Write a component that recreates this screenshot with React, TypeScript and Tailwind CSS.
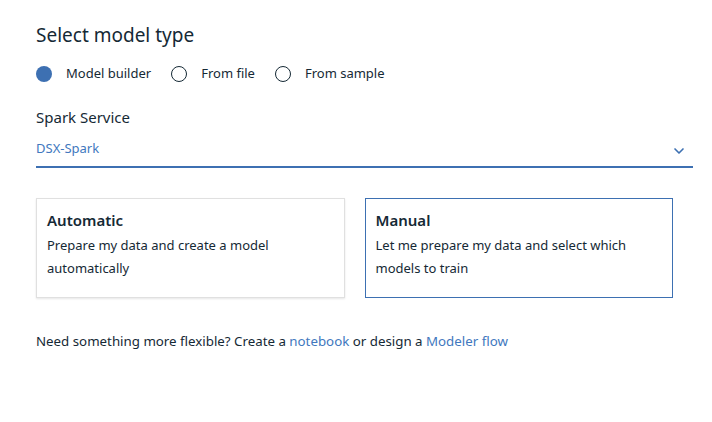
import { ChevronDown } from 'lucide-react';

function Radio({ label, checked }: { label: string; checked?: boolean }) {
  return (
    <label className="flex items-center gap-[14px]">
      {checked ? (
        <span className="w-4 h-4 rounded-full bg-[#3d70b2]" />
      ) : (
        <span className="w-4 h-4 rounded-full border border-[#152935] bg-white" />
      )}
      <span className="text-[13px] text-[#152935]">{label}</span>
    </label>
  );
}

function Card({ title, text, selected }: { title: string; text: string; selected?: boolean }) {
  return (
    <div
      className={
        selected
          ? 'flex-1 h-[100px] border border-[#3d70b2] px-[10px] pt-[11px]'
          : 'flex-1 h-[100px] border border-[#e0e0e0] shadow-[0_1px_2px_rgba(0,0,0,0.1)] px-[10px] pt-[11px]'
      }
    >
      <div className="text-[15px] font-semibold text-[#152935] leading-5">{title}</div>
      <p className="text-[13px] text-[#152935] leading-[23px] mt-[4px]">{text}</p>
    </div>
  );
}

export default function App() {
  return (
    <div className="w-[712px] h-[422px] bg-white px-9 pt-[23px] font-['Noto_Sans',sans-serif]">
      <h2 className="text-[19px] text-[#152935] leading-6">Select model type</h2>
      <div className="flex items-center gap-[20px] mt-[19px] h-4">
        <Radio label="Model builder" checked />
        <Radio label="From file" />
        <Radio label="From sample" />
      </div>
      <div className="mt-[25px] text-[15px] text-[#152935] leading-5">Spark Service</div>
      <div className="mt-[12px] flex items-center justify-between border-b-2 border-[#3d70b2] h-[29px] pb-[7px] mr-[-20px] w-[657px]">
        <span className="text-[13px] text-[#4178be]">DSX-Spark</span>
        <ChevronDown size={16} strokeWidth={2.5} className="text-[#3d70b2] mr-[6px] mt-[4px]" />
      </div>
      <div className="flex gap-5 mt-[30px] w-[637px]">
        <Card title="Automatic" text="Prepare my data and create a model automatically" />
        <Card title="Manual" text="Let me prepare my data and select which models to train" selected />
      </div>
      <p className="mt-[34px] text-[13.3px] text-[#152935]">
        Need something more flexible? Create a <a className="text-[#4178be]">notebook</a> or design a{' '}
        <a className="text-[#4178be]">Modeler flow</a>
      </p>
    </div>
  );
}
